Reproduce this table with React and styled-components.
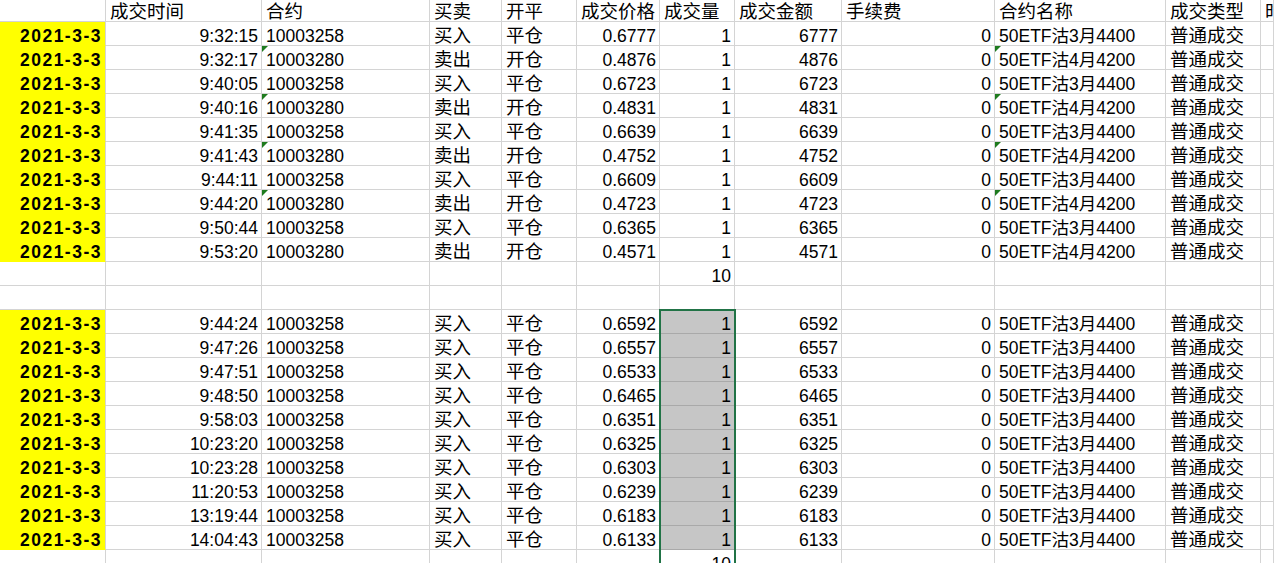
import styled, { createGlobalStyle, css } from "styled-components";

const COLUMN_WIDTHS = [106, 156, 168, 72, 75, 83, 75, 107, 153, 171, 95];
const HEADER_HEIGHT = 22;
const ROW_HEIGHT = 24;
const GRID_COLOR = "#d4d4d4";

const HEADERS = [
  "",
  "成交时间",
  "合约",
  "买卖",
  "开平",
  "成交价格",
  "成交量",
  "成交金额",
  "手续费",
  "合约名称",
  "成交类型",
  "时间",
];

// which columns are right aligned (numbers)
const RIGHT_COLUMNS = [0, 1, 5, 6, 7, 8];
const ONLY_CJK = /^[\u4e00-\u9fff]+$/;

const firstGroup = [
  ["9:32:15", "10003258", "0.6777", "6777"],
  ["9:32:17", "10003280", "0.4876", "4876", true],
  ["9:40:05", "10003258", "0.6723", "6723"],
  ["9:40:16", "10003280", "0.4831", "4831", true],
  ["9:41:35", "10003258", "0.6639", "6639"],
  ["9:41:43", "10003280", "0.4752", "4752", true],
  ["9:44:11", "10003258", "0.6609", "6609"],
  ["9:44:20", "10003280", "0.4723", "4723", true],
  ["9:50:44", "10003258", "0.6365", "6365"],
  ["9:53:20", "10003280", "0.4571", "4571"],
];

const secondGroup = [
  ["9:44:24", "0.6592", "6592"],
  ["9:47:26", "0.6557", "6557"],
  ["9:47:51", "0.6533", "6533"],
  ["9:48:50", "0.6465", "6465"],
  ["9:58:03", "0.6351", "6351"],
  ["10:23:20", "0.6325", "6325"],
  ["10:23:28", "0.6303", "6303"],
  ["11:20:53", "0.6239", "6239"],
  ["13:19:44", "0.6183", "6183"],
  ["14:04:43", "0.6133", "6133"],
];

const tradeRow = (time, code, price, amount, flagged, selected) => {
  const isBuy = code === "10003258";
  const name = isBuy ? "50ETF沽3月4400" : "50ETF沽4月4200";
  return {
    selected,
    cells: [
      { text: "2021-3-3", date: true },
      { text: time },
      { text: code, flag: flagged },
      { text: isBuy ? "买入" : "卖出" },
      { text: isBuy ? "平仓" : "开仓" },
      { text: price },
      { text: "1" },
      { text: amount },
      { text: "0" },
      { text: name, flag: flagged },
      { text: "普通成交" },
      { text: "" },
    ],
  };
};

const sumRow = () => ({
  cells: HEADERS.map((_, i) => ({ text: i === 6 ? "10" : "" })),
});

const emptyRow = () => ({
  cells: HEADERS.map(() => ({ text: "" })),
});

const ROWS = [
  ...firstGroup.map(([t, c, p, a, f]) => tradeRow(t, c, p, a, f, false)),
  sumRow(),
  emptyRow(),
  ...secondGroup.map(([t, p, a]) => tradeRow(t, "10003258", p, a, false, true)),
  sumRow(),
];

const SELECTED_COLUMN = 6;
const SELECTION_START = 12;
const SELECTION_ROWS = 11;

const GlobalStyle = createGlobalStyle`
  html, body {
    margin: 0;
    padding: 0;
    background: #ffffff;
    overflow: hidden;
  }
`;

const Wrapper = styled.div`
  position: relative;
  width: 100%;
  height: 563px;
  overflow: hidden;
  font-family: "Liberation Sans", "Noto Sans CJK SC", sans-serif;
  font-size: 17.5px;
  color: #000000;
`;

const Sheet = styled.div`
  display: grid;
  grid-template-columns: ${COLUMN_WIDTHS.map((w) => `${w}px`).join(" ")} 1fr;
  grid-template-rows: ${HEADER_HEIGHT}px;
  grid-auto-rows: ${ROW_HEIGHT}px;
`;

const Cell = styled.div`
  position: relative;
  box-sizing: border-box;
  display: flex;
  align-items: flex-end;
  justify-content: ${(p) => (p.$right ? "flex-end" : "flex-start")};
  padding: 0 3px 0 4px;
  line-height: 18px;
  font-size: ${(p) => (p.$cjk ? "18.5px" : "inherit")};
  white-space: nowrap;
  overflow: hidden;
  background: #ffffff;
  border-right: 1px solid ${GRID_COLOR};
  border-bottom: 1px solid ${GRID_COLOR};

  ${(p) =>
    p.$date &&
    css`
      background: #ffff00;
      border-bottom-color: #ffff00;
      font-weight: 700;
      letter-spacing: 1.5px;
      padding-right: 3px;
    `}

  ${(p) =>
    p.$selected &&
    css`
      background: #c6c6c6;
      border-bottom-color: #a9a9a9;
    `}

  ${(p) =>
    p.$flag &&
    css`
      &::before {
        content: "";
        position: absolute;
        top: 0;
        left: 0;
        border-top: 6px solid #1e7b1e;
        border-right: 6px solid transparent;
      }
    `}
`;

const SelectionFrame = styled.div`
  position: absolute;
  left: ${(p) => p.$left}px;
  top: ${(p) => p.$top}px;
  width: ${(p) => p.$width}px;
  height: ${(p) => p.$height}px;
  box-sizing: border-box;
  border: 2px solid #217346;
  pointer-events: none;
`;

const frameLeft =
  COLUMN_WIDTHS.slice(0, SELECTED_COLUMN).reduce((s, w) => s + w, 0) - 1;
const frameTop = HEADER_HEIGHT + SELECTION_START * ROW_HEIGHT - 1;

const App = () => {
  return (
    <Wrapper>
      <GlobalStyle />
      <Sheet>
        {HEADERS.map((h, i) => (
          <Cell key={`h${i}`} $cjk={ONLY_CJK.test(h)}>
            {h}
          </Cell>
        ))}
        {ROWS.map((row, r) =>
          row.cells.map((cell, c) => (
            <Cell
              key={`${r}-${c}`}
              $right={RIGHT_COLUMNS.includes(c)}
              $date={cell.date}
              $flag={cell.flag}
              $cjk={ONLY_CJK.test(cell.text)}
              $selected={row.selected && c === SELECTED_COLUMN}
            >
              {cell.text}
            </Cell>
          ))
        )}
      </Sheet>
      <SelectionFrame
        $left={frameLeft}
        $top={frameTop}
        $width={COLUMN_WIDTHS[SELECTED_COLUMN] + 2}
        $height={SELECTION_ROWS * ROW_HEIGHT + 2}
      />
    </Wrapper>
  );
};

export default App;
